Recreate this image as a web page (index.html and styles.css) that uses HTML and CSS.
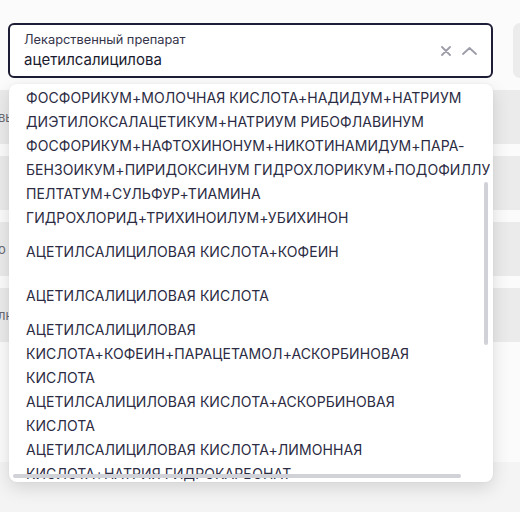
FILE: index.html
```html
<!DOCTYPE html>
<html lang="ru">
<head>
    <meta charset="UTF-8">
    <meta name="viewport" content="width=device-width, initial-scale=1.0">
    <title>Лекарственный препарат</title>
    <link rel="stylesheet" href="styles.css">
</head>
<body>
    <div class="sheet">
        <div class="fieldRow">
            <div class="combo">
                <div class="comboText">
                    <div class="comboLabel">Лекарственный препарат</div>
                    <div class="comboValue">ацетилсалицилова</div>
                </div>
                <div class="comboIcons">
                    <svg width="10" height="10" viewBox="0 0 10 10"><path d="M1 1L9 9M9 1L1 9" stroke="#9d9daa" stroke-width="1.8" stroke-linecap="round" fill="none"/></svg>
                    <svg width="15" height="8" viewBox="0 0 15 8"><path d="M1 7L7.5 1L14 7" stroke="#9d9daa" stroke-width="1.8" stroke-linecap="round" stroke-linejoin="round" fill="none"/></svg>
                </div>
            </div>
            <div class="sideBox"></div>
        </div>

        <div class="rows">
            <div class="row"><span class="rowText">вы</span></div>
            <div class="row"><span class="rowText"></span></div>
            <div class="row"><span class="rowText">о</span></div>
            <div class="row"><span class="rowText">лн</span></div>
        </div>
    </div>

    <!-- open list of the combo, lies over the form -->
    <div class="dropdown">
        <div class="optionList">
            <div class="option">ФОСФОРИКУМ+МОЛОЧНАЯ КИСЛОТА+НАДИДУМ+НАТРИУМ ДИЭТИЛОКСАЛАЦЕТИКУМ+НАТРИУМ РИБОФЛАВИНУМ ФОСФОРИКУМ+НАФТОХИНОНУМ+НИКОТИНАМИДУМ+ПАРА-БЕНЗОИКУМ+ПИРИДОКСИНУМ&nbsp;ГИДРОХЛОРИКУМ+ПОДОФИЛЛУМ ПЕЛТАТУМ+СУЛЬФУР+ТИАМИНА ГИДРОХЛОРИД+ТРИХИНОИЛУМ+УБИХИНОН</div>
            <div class="option">АЦЕТИЛСАЛИЦИЛОВАЯ КИСЛОТА+КОФЕИН</div>
            <div class="option">АЦЕТИЛСАЛИЦИЛОВАЯ КИСЛОТА</div>
            <div class="option">АЦЕТИЛСАЛИЦИЛОВАЯ КИСЛОТА+КОФЕИН+ПАРАЦЕТАМОЛ+АСКОРБИНОВАЯ КИСЛОТА</div>
            <div class="option">АЦЕТИЛСАЛИЦИЛОВАЯ КИСЛОТА+АСКОРБИНОВАЯ КИСЛОТА</div>
            <div class="option">АЦЕТИЛСАЛИЦИЛОВАЯ КИСЛОТА+ЛИМОННАЯ КИСЛОТА+НАТРИЯ ГИДРОКАРБОНАТ</div>
        </div>
        <div class="thumbY"></div>
        <div class="thumbX"></div>
    </div>
</body>
</html>
```

FILE: styles.css
```css
body {
    font-family: 'Inter', 'Liberation Sans', sans-serif;
    background-color: #f4f4f5;
    color: #1b1b2f;
    margin: 0;
    overflow: hidden;
}

.sheet {
    background: #fbfbfb;
    padding-top: 23px;
    height: 439px;
}

.fieldRow {
    display: flex;
    align-items: stretch;
}

.combo {
    box-sizing: border-box;
    width: 485px;
    height: 55px;
    margin-left: 8px;
    border: 2px solid #1d1d36;
    border-radius: 6px;
    background: white;
    display: flex;
    align-items: center;
    padding: 0 14px;
}

.comboText {
    flex: 1;
    padding-top: 1px;
}

.comboLabel {
    font-size: 12.8px;
    line-height: 16px;
    color: #34344a;
}

.comboValue {
    font-size: 15px;
    line-height: 20px;
    margin-top: 2px;
    color: #1b1b2f;
}

.comboIcons {
    display: flex;
    align-items: center;
    gap: 11px;
}

.sideBox {
    flex: 1;
    margin-left: 20px;
    background: #ececed;
    border-radius: 8px 0 0 8px;
}

.rows {
    margin-top: 12px;
    display: flex;
    flex-direction: column;
    gap: 12px;
}

.row {
    height: 54px;
    background: #ebebeb;
    display: flex;
    align-items: center;
    font-size: 13px;
    color: #6a6a72;
}

.rowText {
    margin-left: -2px;
}

.dropdown {
    position: absolute;
    left: 9px;
    top: 84px;
    width: 484px;
    height: 398px;
    background: white;
    border-radius: 8px;
    box-shadow: 0 6px 18px rgba(0, 0, 0, 0.13), 0 0 3px rgba(0, 0, 0, 0.05);
    overflow: hidden;
}

.optionList {
    width: 481px;
    height: 398px;
    overflow: hidden;
    padding-top: 2px;
    box-sizing: border-box;
}

.option {
    min-height: 44px;
    display: flex;
    align-items: center;
    padding: 0 25px 0 17px;
    font-size: 14px;
    line-height: 24px;
    letter-spacing: 0.08px;
    color: #2b2b43;
}

/* overlay scroll thumbs */
.thumbY {
    position: absolute;
    left: 475px;
    top: 98px;
    width: 4px;
    height: 163px;
    border-radius: 2px;
    background: #d1d1d8;
}

.thumbX {
    position: absolute;
    left: 4px;
    top: 390px;
    width: 448px;
    height: 4px;
    border-radius: 2px;
    background: #d1d1d8;
}
```
